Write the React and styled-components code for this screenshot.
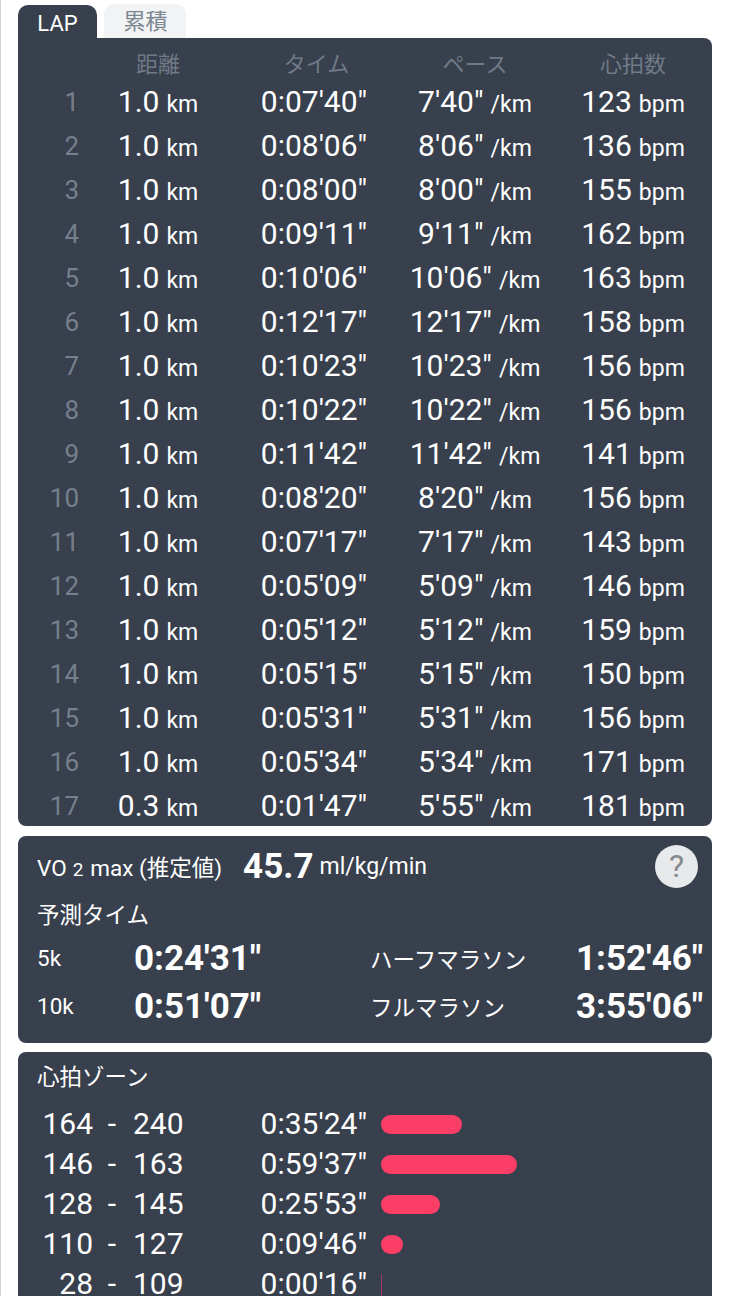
import React from 'react';
import styled, { createGlobalStyle } from 'styled-components';

const GlobalStyle = createGlobalStyle`
  html, body {
    margin: 0;
    padding: 0;
    height: 1296px;
    overflow: hidden;
    background: #ffffff;
  }
  body {
    font-family: Roboto, "Noto Sans CJK JP", sans-serif;
  }
`;

const Page = styled.div`
  box-sizing: border-box;
  height: 1296px;
  overflow: hidden;
  padding: 4px 18px 0 18px;
  border-left: 1px solid #d4d4d4;
  width: 730px;
`;

const Tabs = styled.div`
  display: flex;
  align-items: flex-end;
  gap: 7px;
  height: 34px;
  margin-left: -1px;
`;

const Tab = styled.div`
  box-sizing: border-box;
  height: ${props => (props.$active ? '33px' : '34px')};
  width: ${props => (props.$active ? '79px' : '82px')};
  padding-top: ${props => (props.$active ? '5px' : '4px')};
  padding-left: ${props => (props.$active ? '0' : '1px')};
  text-align: center;
  font-size: 22px;
  line-height: 28px;
  color: ${props => (props.$active ? '#ffffff' : '#7c8691')};
  background: ${props => (props.$active ? '#383f4d' : '#f2f3f5')};
  border-radius: 10px 10px 0 0;
`;

const Panel = styled.section`
  box-sizing: border-box;
  width: 694px;
  margin-left: -1px;
  background: #383f4d;
  color: #ffffff;
  border-radius: ${props => (props.$flatTop ? '0 8px 8px 8px' : '8px')};
  margin-bottom: ${props => props.$gap || 0}px;
`;

const LapGrid = styled.div`
  display: grid;
  grid-template-columns: 61px 158px 154px 168px 148px;
`;

const Row = styled.div`
  display: contents;
`;

const HeadCell = styled.div`
  box-sizing: border-box;
  height: 40px;
  padding-top: 14px;
  padding-left: ${props => props.$nudge || 0}px;
  line-height: 26px;
  text-align: center;
  font-size: 22px;
  color: #6f7a87;
`;

const LapNo = styled.div`
  box-sizing: border-box;
  height: 44px;
  padding-top: 4px;
  line-height: 40px;
  text-align: right;
  font-size: 26px;
  color: #75808c;
`;

const Cell = styled.div`
  box-sizing: border-box;
  height: 44px;
  padding-top: 4px;
  line-height: 40px;
  text-align: center;
  font-size: 30px;
  white-space: nowrap;
`;

const Unit = styled.span`
  font-size: 23px;
  margin-left: 7px;
`;

const VoRow = styled.div`
  display: flex;
  align-items: center;
  height: 60px;
  padding: 0 14px 0 19px;
`;

const VoLabel = styled.span`
  font-size: 22.5px;
`;

const Sub = styled.span`
  font-size: 19px;
  margin: 0 7px 0 6px;
`;

const VoValue = styled.span`
  font-size: 35px;
  font-weight: 700;
  margin-left: 21px;
`;

const VoUnit = styled.span`
  font-size: 23px;
  margin-left: 6px;
  flex: 1;
`;

const HelpButton = styled.div`
  width: 43px;
  height: 43px;
  border-radius: 50%;
  background: #e8e9ea;
  color: #85898f;
  font-size: 32px;
  line-height: 43px;
  text-align: center;
`;

const SectionTitle = styled.div`
  font-size: 22.5px;
  line-height: 28px;
  padding-left: 19px;
  padding-top: ${props => props.$top || 5}px;
`;

const PredictGrid = styled.div`
  display: grid;
  grid-template-columns: 97px 236px 206px 1fr;
  grid-auto-rows: 48px;
  align-items: center;
  margin-top: 5px;
  padding: 0 0 13px 19px;
`;

const PredictLabel = styled.div`
  font-size: 22.5px;
  white-space: nowrap;
`;

const PredictTime = styled.div`
  font-size: 35px;
  font-weight: 700;
  white-space: nowrap;
`;

const ZoneGrid = styled.div`
  display: grid;
  grid-template-columns: 174px 175px 1fr;
  grid-auto-rows: 40px;
  align-items: center;
  padding: 13px 0 20px 0;
`;

const ZoneRange = styled.div`
  display: grid;
  grid-template-columns: 75px 38px 60px;
  font-size: 30px;
  line-height: 22px;
`;

const ZoneLow = styled.span`
  text-align: right;
`;

const ZoneDash = styled.span`
  text-align: center;
`;

const ZoneHigh = styled.span`
  text-align: left;
  padding-left: 2px;
`;

const ZoneTime = styled.div`
  font-size: 30px;
  line-height: 22px;
  text-align: right;
  white-space: nowrap;
`;

const BarCell = styled.div`
  padding-left: 14px;
`;

const Bar = styled.div`
  height: ${props => (props.$thin ? '21px' : '19px')};
  background: ${props => (props.$thin ? '#a8375a' : '#fb3e66')};
  border-radius: ${props => (props.$thin ? '0' : '10px')};
`;

const laps = [
  ['1.0', "0:07'40\"", "7'40\"", '123'],
  ['1.0', "0:08'06\"", "8'06\"", '136'],
  ['1.0', "0:08'00\"", "8'00\"", '155'],
  ['1.0', "0:09'11\"", "9'11\"", '162'],
  ['1.0', "0:10'06\"", "10'06\"", '163'],
  ['1.0', "0:12'17\"", "12'17\"", '158'],
  ['1.0', "0:10'23\"", "10'23\"", '156'],
  ['1.0', "0:10'22\"", "10'22\"", '156'],
  ['1.0', "0:11'42\"", "11'42\"", '141'],
  ['1.0', "0:08'20\"", "8'20\"", '156'],
  ['1.0', "0:07'17\"", "7'17\"", '143'],
  ['1.0', "0:05'09\"", "5'09\"", '146'],
  ['1.0', "0:05'12\"", "5'12\"", '159'],
  ['1.0', "0:05'15\"", "5'15\"", '150'],
  ['1.0', "0:05'31\"", "5'31\"", '156'],
  ['1.0', "0:05'34\"", "5'34\"", '171'],
  ['0.3', "0:01'47\"", "5'55\"", '181'],
];

const zones = [
  ['164', '240', "0:35'24\"", 81],
  ['146', '163', "0:59'37\"", 136],
  ['128', '145', "0:25'53\"", 59],
  ['110', '127', "0:09'46\"", 22],
  ['28', '109', "0:00'16\"", 1],
];

export default function App() {
  return (
    <Page>
      <GlobalStyle />
      <Tabs>
        <Tab $active>LAP</Tab>
        <Tab>累積</Tab>
      </Tabs>
      <Panel $flatTop $gap={10}>
        <LapGrid>
          <Row>
            <HeadCell />
            <HeadCell>距離</HeadCell>
            <HeadCell $nudge={5}>タイム</HeadCell>
            <HeadCell>ペース</HeadCell>
            <HeadCell>心拍数</HeadCell>
          </Row>
          {laps.map((lap, index) => (
            <Row key={index}>
              <LapNo>{index + 1}</LapNo>
              <Cell>{lap[0]}<Unit>km</Unit></Cell>
              <Cell>{lap[1]}</Cell>
              <Cell>{lap[2]}<Unit>/km</Unit></Cell>
              <Cell>{lap[3]}<Unit>bpm</Unit></Cell>
            </Row>
          ))}
        </LapGrid>
      </Panel>
      <Panel $gap={9}>
        <VoRow>
          <VoLabel>VO<Sub>2</Sub>max (推定値)</VoLabel>
          <VoValue>45.7</VoValue>
          <VoUnit>ml/kg/min</VoUnit>
          <HelpButton>?</HelpButton>
        </VoRow>
        <SectionTitle>予測タイム</SectionTitle>
        <PredictGrid>
          <PredictLabel>5k</PredictLabel>
          <PredictTime>0:24'31"</PredictTime>
          <PredictLabel>ハーフマラソン</PredictLabel>
          <PredictTime>1:52'46"</PredictTime>
          <PredictLabel>10k</PredictLabel>
          <PredictTime>0:51'07"</PredictTime>
          <PredictLabel>フルマラソン</PredictLabel>
          <PredictTime>3:55'06"</PredictTime>
        </PredictGrid>
      </Panel>
      <Panel>
        <SectionTitle $top={11}>心拍ゾーン</SectionTitle>
        <ZoneGrid>
          {zones.map(zone => (
            <React.Fragment key={zone[0]}>
              <ZoneRange>
                <ZoneLow>{zone[0]}</ZoneLow>
                <ZoneDash>-</ZoneDash>
                <ZoneHigh>{zone[1]}</ZoneHigh>
              </ZoneRange>
              <ZoneTime>{zone[2]}</ZoneTime>
              <BarCell>
                <Bar $thin={zone[3] < 2} style={{ width: zone[3] }} />
              </BarCell>
            </React.Fragment>
          ))}
        </ZoneGrid>
      </Panel>
    </Page>
  );
}
